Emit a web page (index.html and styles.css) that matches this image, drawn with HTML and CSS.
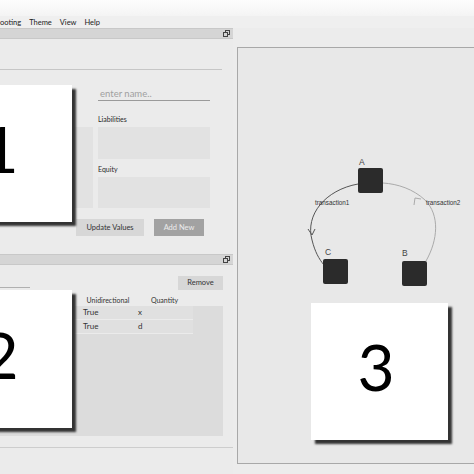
FILE: index.html
```html
<!DOCTYPE html>
<html>
<head>
<meta charset="utf-8">
<link rel="stylesheet" href="styles.css">
</head>
<body>
<div class="titlebar"></div>
<div class="menubar"><span>ooting</span><span>Theme</span><span>View</span><span>Help</span></div>
<div class="main">
  <div class="left">
    <div class="dock">
      <div class="docktitle">
        <svg class="float" viewBox="0 0 7 7" width="7" height="7"><rect x="2.5" y="0.5" width="4" height="4" fill="none" stroke="#444"/><rect x="0.5" y="2.5" width="4" height="4" fill="#d5d5d5" stroke="#444"/></svg>
      </div>
      <div class="dockbody body1">
        <div class="rule"></div>
        <div class="form">
          <div class="name">enter name..</div>
          <div class="lbl lbl-liab">Liabilities</div>
          <div class="box assets"></div>
          <div class="box liab"></div>
          <div class="lbl lbl-eq">Equity</div>
          <div class="box eq"></div>
        </div>
        <div class="buttons">
          <div class="btn update">Update Values</div>
          <div class="btn addnew">Add New</div>
        </div>
        <div class="card card1">1</div>
      </div>
    </div>
    <div class="dock">
      <div class="docktitle">
        <svg class="float" viewBox="0 0 7 7" width="7" height="7"><rect x="2.5" y="0.5" width="4" height="4" fill="none" stroke="#444"/><rect x="0.5" y="2.5" width="4" height="4" fill="#d5d5d5" stroke="#444"/></svg>
      </div>
      <div class="dockbody body2">
        <div class="toolrow">
          <div class="tabline"></div>
          <div class="btn remove">Remove</div>
        </div>
        <div class="table">
          <div class="thead"><div></div><div>Unidirectional</div><div>Quantity</div></div>
          <div class="tbody">
            <div class="tr"><div></div><div>True</div><div class="q">x</div></div>
            <div class="tr"><div></div><div>True</div><div class="q">d</div></div>
          </div>
        </div>
        <div class="card card2">2</div>
      </div>
    </div>
    <div class="status"></div>
  </div>
  <div class="splitter"></div>
  <div class="right">
    <div class="canvas">
      <svg class="graph" viewBox="238 48 236 415" width="236" height="415">
        <path d="M358,184 C325,190 305,215 312,240 C315,252 319,259 324,265" fill="none" stroke="#555" stroke-width="1"/>
        <polyline points="308,229 312,235 315,229" fill="none" stroke="#555" stroke-width="1"/>
        <path d="M426,261 C438,240 440,215 425,200 C413,189 398,184 383,183" fill="none" stroke="#aaa" stroke-width="1"/>
        <polyline points="414,205 415,198 421,199" fill="none" stroke="#aaa" stroke-width="1"/>
        <rect x="358" y="168" width="25" height="25" rx="2" fill="#2b2b2b"/>
        <rect x="323" y="259" width="25" height="25" rx="2" fill="#2b2b2b"/>
        <rect x="402" y="261" width="25" height="25" rx="2" fill="#2b2b2b"/>
        <text x="359" y="164.5" class="nl">A</text>
        <text x="325" y="255" class="nl">C</text>
        <text x="402" y="256" class="nl">B</text>
        <text x="315" y="204.5" class="el">transaction1</text>
        <text x="426" y="204.5" class="el">transaction2</text>
      </svg>
      <div class="card card3">3</div>
    </div>
  </div>
</div>
</body>
</html>
```
FILE: styles.css
```css
* { box-sizing: border-box; }
html, body { margin: 0; padding: 0; }
body {
  width: 474px;
  height: 474px;
  overflow: hidden;
  background: #ececec;
  font-family: Lato, "Open Sans", sans-serif;
  color: #333;
}
.titlebar {
  height: 16px;
  background: linear-gradient(#fdfdfd, #f4f4f4);
}
.menubar {
  height: 12px;
  display: flex;
  gap: 8px;
  font-size: 7.5px;
  line-height: 13px;
  color: #222;
  background: #efefef;
}
.main {
  display: flex;
  height: 446px;
}
.left {
  width: 233px;
  display: flex;
  flex-direction: column;
  background: #ebebeb;
}
.docktitle {
  height: 11px;
  background: #d5d5d5;
  border-top: 1px solid #c8c8c8;
  border-bottom: 1px solid #c8c8c8;
  display: flex;
  justify-content: flex-end;
  align-items: center;
  padding-right: 3px;
}
.float { display: block; }
.dockbody {
  position: relative;
  overflow: hidden;
}
.body1 { height: 215px; }
.body2 { height: 182px; }
.rule {
  margin-top: 30px;
  width: 222px;
  border-top: 1px solid #c6c6c6;
}
.form {
  display: grid;
  grid-template-columns: 83px 112px;
  column-gap: 5px;
  padding-left: 10px;
  margin-top: 18px;
}
.name {
  grid-column: 2;
  grid-row: 1;
  height: 13px;
  border-bottom: 1px solid #9a9a9a;
  font-size: 9.5px;
  line-height: 12px;
  color: #a0a0a0;
  padding-left: 2px;
}
.lbl {
  grid-column: 2;
  font-size: 7px;
  line-height: 9px;
  color: #2a2a2a;
}
.lbl-liab { grid-row: 2; margin-top: 14px; }
.lbl-eq { grid-row: 4; margin-top: 6px; }
.box { background: #e2e2e2; }
.liab { grid-column: 2; grid-row: 3; margin-top: 3px; height: 32px; }
.eq { grid-column: 2; grid-row: 5; margin-top: 3px; height: 31px; }
.assets { grid-column: 1; grid-row: 3 / 6; margin-top: 3px; }
.buttons {
  display: flex;
  gap: 10px;
  padding-left: 76px;
  margin-top: 11px;
}
.btn {
  height: 17px;
  font-size: 7.5px;
  line-height: 17px;
  text-align: center;
}
.update { width: 68px; background: #d7d7d7; color: #333; }
.addnew { width: 50px; background: #a2a2a2; color: #ececec; }
.toolrow {
  display: flex;
  justify-content: space-between;
  align-items: flex-start;
  padding-right: 10px;
  margin-top: 11px;
  height: 14px;
}
.tabline {
  width: 30px;
  margin-top: 11px;
  border-top: 1px solid #b0b0b0;
}
.remove {
  width: 45px;
  height: 14px;
  line-height: 14px;
  background: #d7d7d7;
}
.table {
  margin-top: 4px;
  margin-right: 10px;
}
.thead {
  display: grid;
  grid-template-columns: 80px 56px 57px;
  height: 12px;
  font-size: 7px;
  line-height: 12px;
  text-align: center;
}
.tbody {
  background: #dcdcdc;
  height: 130px;
}
.tr {
  display: grid;
  grid-template-columns: 80px 56px 57px;
  height: 14px;
}
.tr div {
  background: #e0e0e0;
  border-bottom: 1px solid #ebebeb;
  font-size: 8px;
  line-height: 13px;
  padding-left: 3px;
}
.tr .q { padding-left: 2px; }
.status {
  flex: 1;
  border-top: 1px solid #cdcdcd;
}
.splitter { width: 4px; }
.right {
  flex: 1;
  padding-top: 19px;
}
.canvas {
  position: relative;
  height: 417px;
  border: 1px solid #a8a8a8;
  border-right: none;
  background: #e8e8e8;
}
.graph {
  position: absolute;
  left: 0;
  top: 0;
}
.nl {
  font-family: "Liberation Sans", Arial, sans-serif;
  font-size: 8.5px;
  fill: #444;
}
.el {
  font-family: "Liberation Sans", Arial, sans-serif;
  font-size: 6.3px;
  fill: #333;
}
.card {
  position: absolute;
  width: 137px;
  height: 137px;
  background: #fff;
  box-shadow: 4px 4px 2px #333;
  display: flex;
  align-items: center;
  justify-content: center;
  font-family: Lato, sans-serif;
  font-size: 64px;
  line-height: 1;
  color: #000;
  padding-bottom: 9px;
  padding-right: 7px;
}
.card1 { left: -65px; top: 46px; }
.card2 { left: -65px; top: 25px; height: 138px; }
.card3 { left: 73px; top: 255px; }
```
